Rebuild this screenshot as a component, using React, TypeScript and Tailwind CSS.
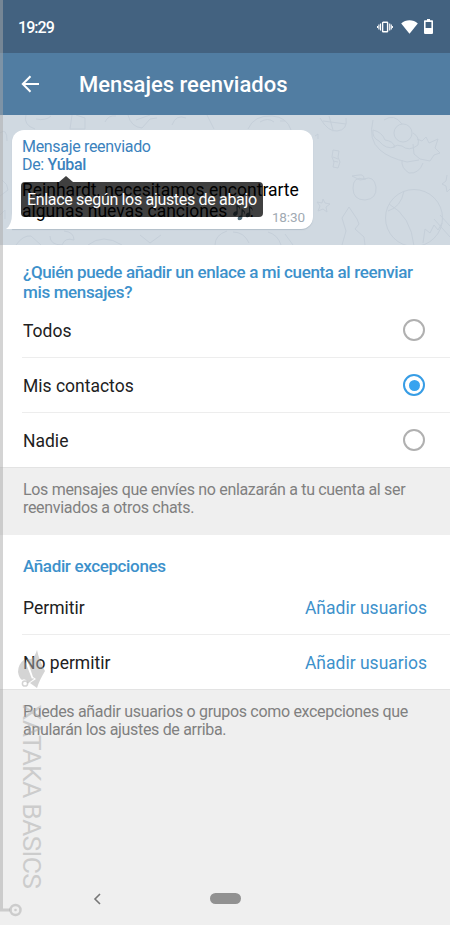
import React, { useState } from "react";

const AUDIENCES = ["Todos", "Mis contactos", "Nadie"];
const EXCEPTIONS = ["Permitir", "No permitir"];

function StatusBar() {
  return (
    <div className="flex h-[53px] items-center justify-between bg-[#436280] pl-[18px] pr-[17px] text-white">
      <span className="pt-[2px] text-[16px] font-medium tracking-[-0.95px]">19:29</span>
      <div className="flex items-center">
        <svg className="mr-2" width="16" height="12" viewBox="0 0 16 12" fill="none" stroke="currentColor">
          <rect x="5.6" y="1.2" width="5" height="9.6" rx=".6" strokeWidth="1.4" />
          <path d="M3.5 2.5v7M12.7 2.5v7M1.9 3.5v5M14.3 3.5v5M.5 5v2M15.6 5v2" strokeWidth="1.1" />
        </svg>
        <svg className="mr-1.5" width="17" height="14" viewBox="0 0 17 14" fill="currentColor">
          <path d="M8.5 13.8.2 3.6C4.8-.8 12.2-.8 16.8 3.6Z" />
        </svg>
        <svg width="9" height="15" viewBox="0 0 9 15" fill="currentColor" fillRule="evenodd">
          <path d="M3 0h3v1.3h2.2q.8 0 .8.8v12q0 .8-.8.8H.8Q0 14.9 0 14.1v-12q0-.8.8-.8H3ZM1.6 3v6h5.8V3Z" />
        </svg>
      </div>
    </div>
  );
}

function Header() {
  return (
    <header className="flex h-[62px] items-center bg-[#517da2] pl-[21px] text-white">
      <svg width="19" height="18" viewBox="0 0 19 18" fill="none" stroke="currentColor" strokeWidth="2">
        <path d="M18 9H2M9.5 1.3 1.8 9l7.7 7.7" />
      </svg>
      <h1 className="ml-[39px] text-[22px] font-medium">Mensajes reenviados</h1>
    </header>
  );
}

// Faint line doodles behind the message preview
function Doodles() {
  return (
    <svg className="absolute inset-0" width="450" height="130" viewBox="0 0 450 130" fill="none" stroke="#c5cfd9" strokeWidth="1">
      <path d="M26 0q-3 10 9 14M36 4q10 2 15-3M72 0l-2 14h15V3l-9-3M105 7q3-7 11-6M128 0q3 12 14 13l8-9 7-1M136 5l14-5M172 10q4-11 14-7M207 0l7 14" />
      <path d="M248 14q6-14 24-13 15 1 19 14M260 7q8-5 14 0M280 6h5M320 3q8 14 17 13 11-1 9-13M323 6l23 3M329 1l4 14" />
      <circle cx="403" cy="18" r="9" />
      <path d="M373 5q-5 20 7 30 9 8 27 12l12-2M373 15q9 2 12 10 8 1 10 7-9 3-16-6-7-3-6-11M384 5q10-7 18 4M413 18q7 4 5 12-9 7-16 1-5-2-9 1M417 24l5 2 4-4 3 6 9-4-3 9 5 5-6 2-4 6-10-2-6-5-1-10M402 45q-1 8 7 13 10 1 14-10" />
      <path d="m333 35 6 1-1 6 2 5-2 6-5-1 1-5-2-5ZM333 42l5 2M333 46l5 1M315 21l3-2v5" />
      <path d="M364 64q-11-3-11 9t12 12q12-1 11-13-2-12-12-8 0-5-5-4l-7 1 8 4 6-1" />
      <path d="m323 84 2 4 5 1-4 3 1 5-4-3-5 2 2-5-3-4 5 1ZM447 60l-1 6-4 3 4 2 1 6 3-3M342 130l4-14-4-13 7-11 8 12 2 5-4 5 9 8 1 8" />
      <circle cx="414" cy="103" r="28.5" />
      <path d="M389 89q22 12 25 42M404 76q-3 16-16 20M423 128l2-14 5 4 4-8 4 5 4-7M434 104l16 18M440 100l10 11" />
      <path d="M281 130q-3-10-13-13M285 119l8 11M16 130q7-10 15-9l10 9M50 121q0 9 12 9 3-8 12-5 0-8-10-9M88 130q15-12 34 0M140 120l10 8 11-8M215 130q0-10 12-14M233 117q11 0 16 11" />
      <path d="M0 18q7-6 7 8M2 65q6 4 6 10l-8 6M0 100l5-5v9" />
    </svg>
  );
}

function MessagePreview() {
  return (
    <section className="relative h-[130px] bg-[#d0d9e1] pl-[12px] pt-[15px]">
      <Doodles />
      <div className="relative h-[99px] w-[301px] rounded-[12px] rounded-bl-none bg-white px-[10px] pt-[8px] shadow-[0_1px_1px_#b2bec9]">
        <svg className="absolute -left-[6px] bottom-0" width="7" height="16" viewBox="0 0 7 16">
          <path d="M7 0v16H0q6-4 6-16Z" fill="white" />
        </svg>
        <p className="whitespace-nowrap text-[16px] leading-[18px] tracking-[-0.32px] text-[#3b82bd]">Mensaje reenviado</p>
        <p className="whitespace-nowrap text-[16px] leading-[18px] tracking-[-0.32px] text-[#3b82bd]">De: <span className="font-medium">Yúbal</span></p>
        <p className="mt-[6px] whitespace-nowrap text-[17.5px] leading-[21px] text-black">
          Reinhardt, necesitamos encontrarte<br />algunas nuevas canciones <span className="relative top-[2px] -mr-1">🎶</span>.
        </p>
        <span className="absolute bottom-[3px] right-[8px] text-[13.5px] leading-[18px] tracking-[-0.1px] text-[#a1aab3]">18:30</span>
        <div className="absolute left-[9px] top-[52px] flex h-[35px] w-[242px] items-center rounded-[4px] bg-black/75 pl-[6px] text-white">
          <svg className="absolute -top-[6px] left-[38px]" width="14" height="6" viewBox="0 0 14 6">
            <path d="m0 6 7-6 7 6Z" fill="black" fillOpacity=".75" />
          </svg>
          <span className="whitespace-nowrap pt-px text-[16px] tracking-[-0.32px]">Enlace según los ajustes de abajo</span>
        </div>
      </div>
    </section>
  );
}

function Radio({ checked }: { checked: boolean }) {
  return (
    <span className={`flex size-[22px] items-center justify-center rounded-full border-2 ${checked ? "border-[#379de5]" : "border-[#b0b0b0]"}`}>
      {checked && <span className="size-[11px] rounded-full bg-[#37a3ef]" />}
    </span>
  );
}

function Watermark() {
  return (
    <div className="pointer-events-none absolute inset-0 text-[#aaa]/50">
      <svg className="absolute inset-0" width="450" height="925" viewBox="0 0 450 925" fill="none">
        <path d="M1.5 0v910H10" stroke="currentColor" strokeWidth="3" />
        <circle cx="15.5" cy="910" r="5" stroke="currentColor" strokeWidth="2.5" />
        <circle cx="15.5" cy="910" r="1.3" fill="currentColor" />
        <path d="M25 659q-7 5-7 13 1 6 4 8 3-2 6 2l4-3-7-18ZM27 659l6 18 3 2-6 4 7 5q2-7 8-17-6-11-8-21-2 7-6 9Z" fill="currentColor" />
        <path d="m33.5 678.5-6 4.5" stroke="currentColor" strokeWidth="1.5" />
        <circle cx="25" cy="683.5" r="2.6" stroke="currentColor" strokeWidth="1.5" />
      </svg>
      <span className="absolute left-[18px] top-[704px] whitespace-nowrap text-[26.5px] leading-[28px] tracking-[-0.8px] [writing-mode:vertical-rl]">XATAKA BASICS</span>
    </div>
  );
}

export default function App() {
  const [audience, setAudience] = useState(1);

  return (
    <div className="relative flex h-[925px] w-[450px] flex-col overflow-hidden bg-[#efefef] font-[Roboto,sans-serif] text-[#212121]">
      <StatusBar />
      <Header />
      <MessagePreview />

      <section className="h-[222px] bg-white pt-[17px]">
        <h2 className="whitespace-nowrap pl-[23px] text-[17px] font-medium leading-[20px] tracking-[-0.36px] text-[#3d91cb]">
          ¿Quién puede añadir un enlace a mi cuenta al reenviar<br />mis mensajes?
        </h2>
        <div className="mt-px">
          {AUDIENCES.map((label, i) => (
            <button
              key={label}
              onClick={() => setAudience(i)}
              className="ml-[22px] flex h-[55px] w-[428px] items-center justify-between border-b border-[#ededed] pl-px pr-[25px] text-[17.5px] last:h-[54px] last:border-0"
            >
              <span className="pt-[2px]">{label}</span>
              <Radio checked={audience === i} />
            </button>
          ))}
        </div>
      </section>

      <p className="h-[68px] whitespace-nowrap border-t border-[#e3e3e3] pl-[23px] pt-[13px] text-[16px] leading-[18px] tracking-[-0.32px] text-[#808080]">
        Los mensajes que envíes no enlazarán a tu cuenta al ser<br />reenviados a otros chats.
      </p>

      <section className="h-[154px] bg-white pt-[21px]">
        <h2 className="pl-[23px] text-[17px] font-medium leading-[20px] tracking-[-0.36px] text-[#3d91cb]">Añadir excepciones</h2>
        <div className="mt-[4px]">
          {EXCEPTIONS.map(label => (
            <div key={label} className="ml-[22px] flex h-[55px] items-center justify-between border-b border-[#ededed] pl-px pr-[23px] pt-[2px] text-[17.5px] last:border-0">
              <span>{label}</span>
              <span className="text-[#3d91cb]">Añadir usuarios</span>
            </div>
          ))}
        </div>
      </section>

      <p className="whitespace-nowrap border-t border-[#e3e3e3] pl-[23px] pt-[13px] text-[16px] leading-[18px] tracking-[-0.32px] text-[#808080]">
        Puedes añadir usuarios o grupos como excepciones que<br />anularán los ajustes de arriba.
      </p>

      <nav className="mt-auto flex h-[53px] items-center pl-[93px]">
        <svg width="8" height="12" viewBox="0 0 8 12" fill="none" stroke="#777" strokeWidth="1.6">
          <path d="M7 1 2 6l5 5" />
        </svg>
        <span className="ml-[109px] h-[11px] w-[31px] rounded-full bg-[#919191]" />
      </nav>
      <Watermark />
    </div>
  );
}
